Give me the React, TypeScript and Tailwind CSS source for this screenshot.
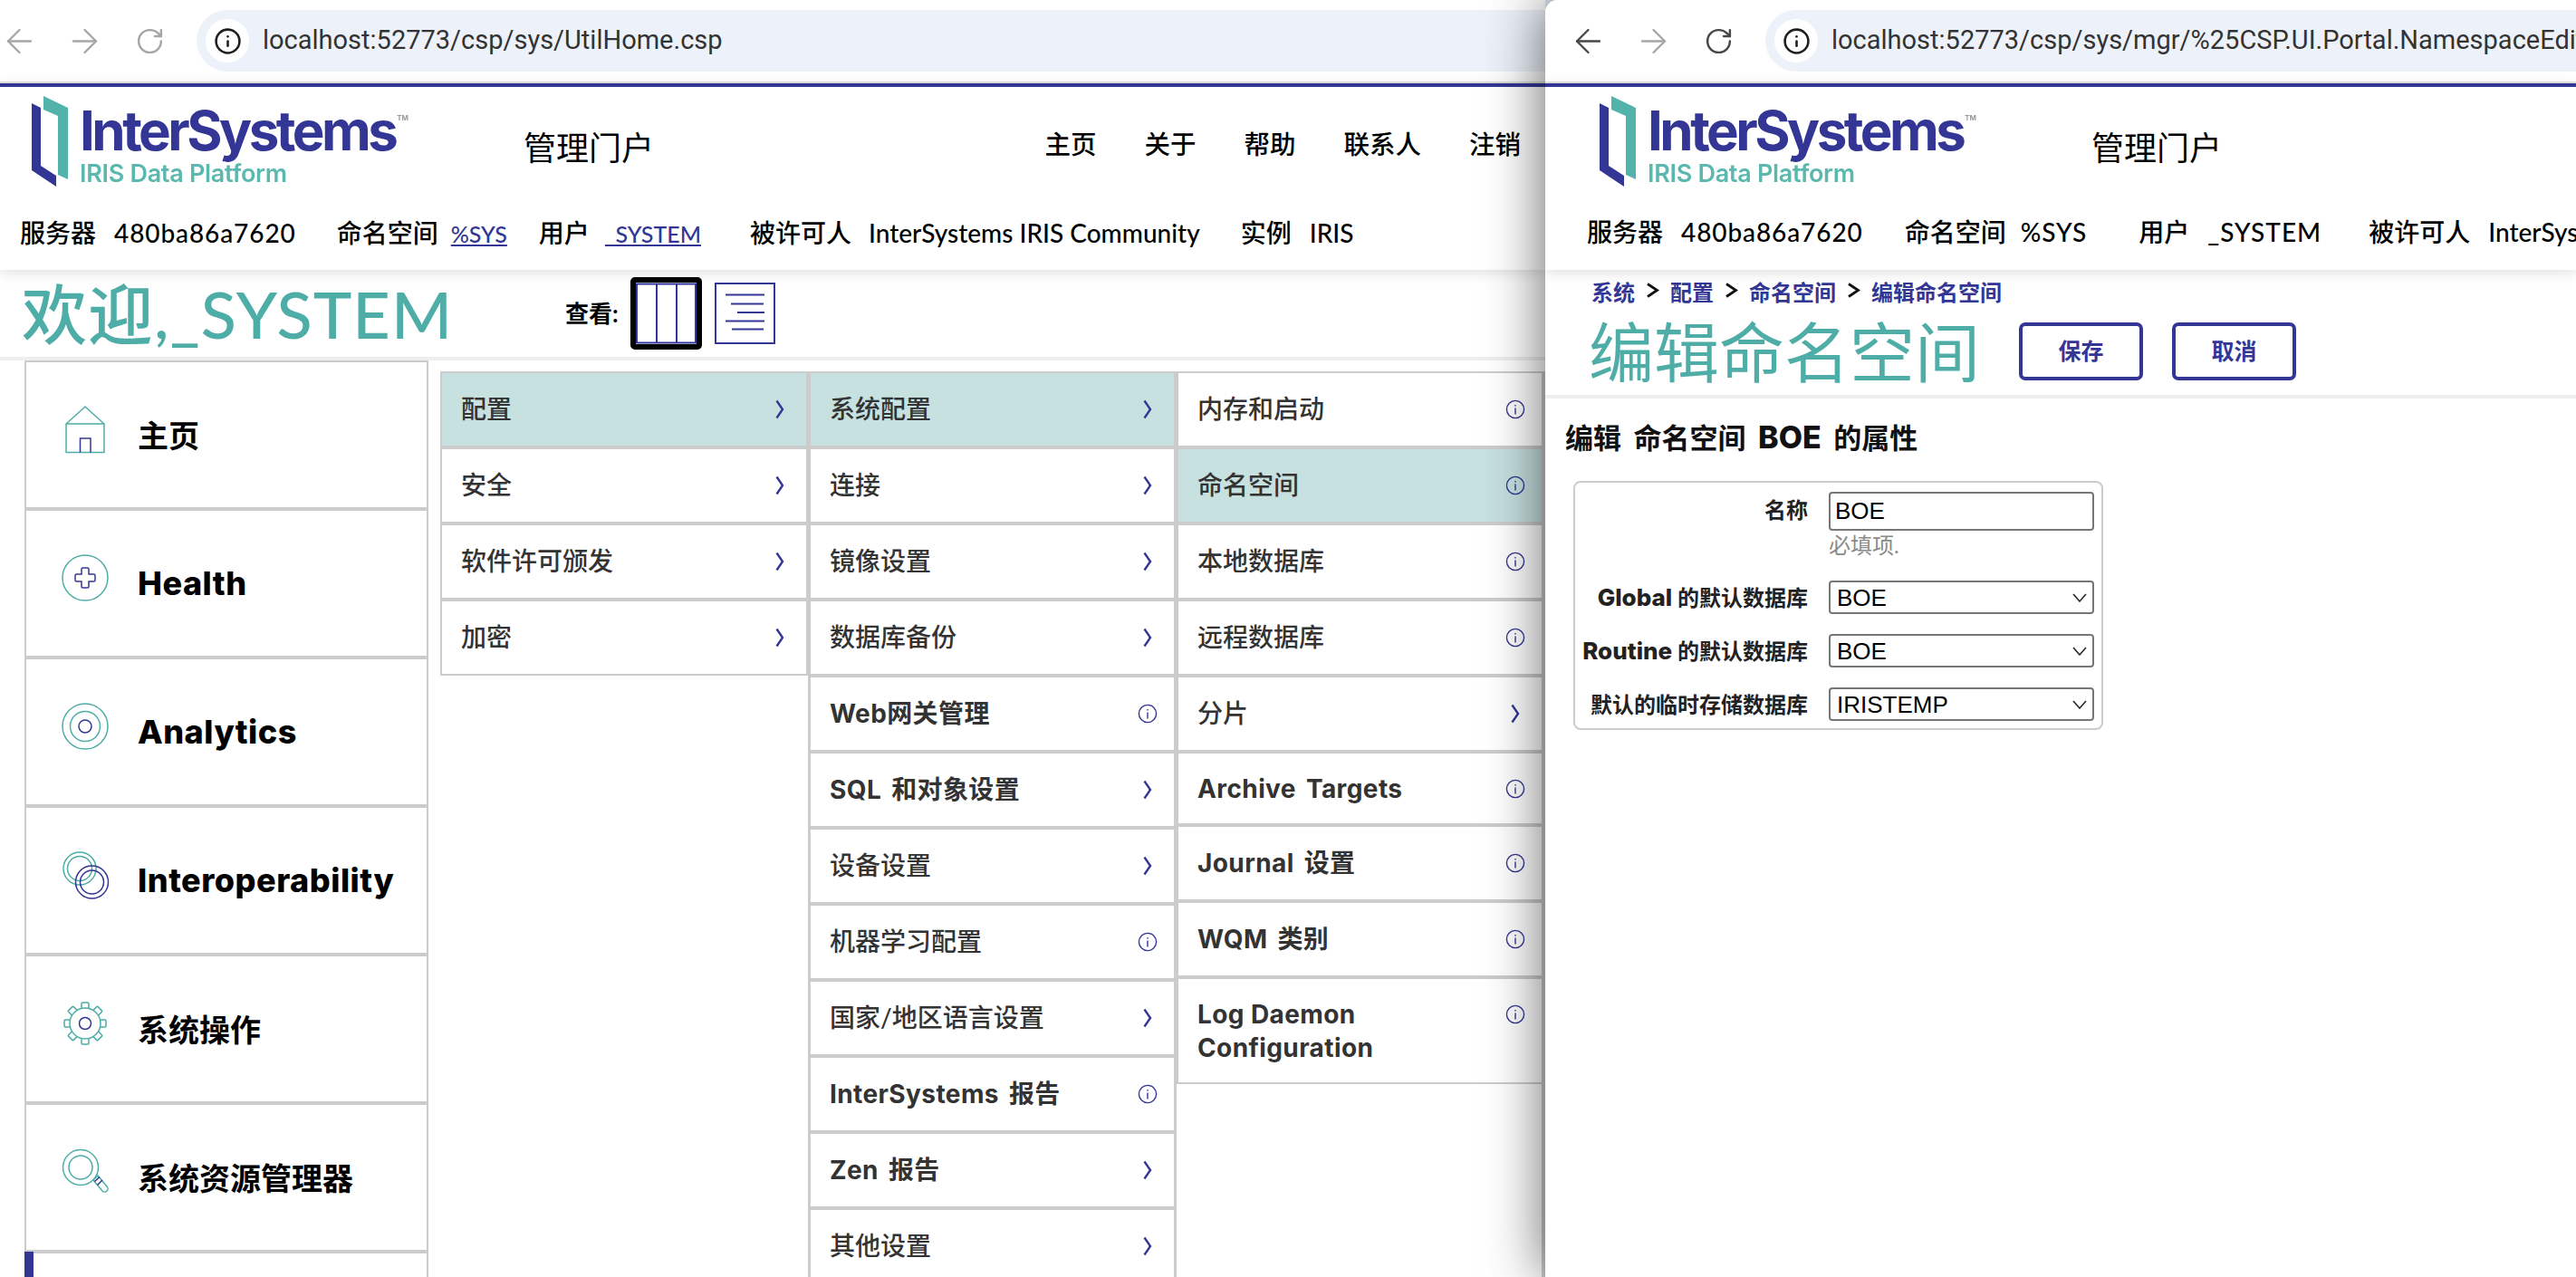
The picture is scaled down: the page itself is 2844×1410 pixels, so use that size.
import { ArrowLeft, ArrowRight, Info, RotateCw } from "lucide-react";
import type { ReactNode } from "react";

const TEAL = "#4fada7";
const BLUE = "#333695";

type Row = { label: string; kind: "more" | "info"; active?: boolean; bold?: boolean; short?: boolean };

const col1: Row[] = [
  { label: "配置", kind: "more", active: true },
  { label: "安全", kind: "more" },
  { label: "软件许可颁发", kind: "more" },
  { label: "加密", kind: "more" },
];

const col2: Row[] = [
  { label: "系统配置", kind: "more", active: true },
  { label: "连接", kind: "more" },
  { label: "镜像设置", kind: "more" },
  { label: "数据库备份", kind: "more" },
  { label: "Web网关管理", kind: "info", bold: true },
  { label: "SQL 和对象设置", kind: "more", bold: true },
  { label: "设备设置", kind: "more" },
  { label: "机器学习配置", kind: "info" },
  { label: "国家/地区语言设置", kind: "more" },
  { label: "InterSystems 报告", kind: "info", bold: true },
  { label: "Zen 报告", kind: "more", bold: true },
  { label: "其他设置", kind: "more" },
];

const col3: Row[] = [
  { label: "内存和启动", kind: "info" },
  { label: "命名空间", kind: "info", active: true },
  { label: "本地数据库", kind: "info" },
  { label: "远程数据库", kind: "info" },
  { label: "分片", kind: "more" },
  { label: "Archive Targets", kind: "info", bold: true, short: true },
  { label: "Journal 设置", kind: "info", bold: true },
  { label: "WQM 类别", kind: "info", bold: true },
];

function Chevron() {
  return (
    <svg width="10" height="22" viewBox="0 0 10 22" fill="none" stroke={BLUE} strokeWidth="2.4">
      <path d="M1.5 1.5 8 11 1.5 20.5" />
    </svg>
  );
}

function InfoDot() {
  return (
    <svg width="22" height="22" viewBox="0 0 22 22" fill="none" stroke={BLUE} strokeWidth="1.4">
      <circle cx="11" cy="11" r="9.6" />
      <path d="M11 9.5v7" />
      <path d="M11 6v1.4" />
    </svg>
  );
}

function MenuRow({ row }: { row: Row }) {
  return (
    <div
      className={`flex shrink-0 items-center justify-between border-b-4 border-[#cccccc] pl-[21px] pr-[18px] text-[28px] text-[#333333] ${
        row.short ? "h-[81px]" : "h-[84px]"
      } ${row.active ? "bg-[#c7e1e0]" : "bg-white"} ${
        row.bold ? "font-bold tracking-[0.4px] [word-spacing:4px] [font-family:Inter,'Noto_Sans_CJK_SC',sans-serif]" : "font-medium"
      }`}
    >
      <span className={row.bold ? "" : "pb-[2px]"}>{row.label}</span>
      <span className="flex w-[22px] justify-center">{row.kind === "more" ? <Chevron /> : <InfoDot />}</span>
    </div>
  );
}

function Logo() {
  return (
    <div className="flex select-none blur-[0.5px]">
      <svg width="42" height="102" viewBox="0 0 42 102" className="shrink-0">
        <path d="M13 0 40 13V92L29 87V22L13 15Z" fill="#52b3ab" />
        <path d="M0 8 10 13V77L27 88V100L0 82Z" fill={BLUE} />
      </svg>
      <div className="mt-[6px] ml-[11px] flex flex-col">
        <div className="flex items-start">
          <span className="text-[60px] leading-[65px] font-bold tracking-[-3.5px] text-[#333695] [font-family:Inter,sans-serif]">
            InterSystems
          </span>
          <span className="mt-[12px] ml-[2px] text-[8px] font-bold text-[#9a9a9a] [font-family:Inter,sans-serif]">TM</span>
        </div>
        <span className="text-[27px] leading-[30px] font-semibold tracking-[-0.3px] text-[#5bb8ae] [font-family:Inter,sans-serif]">
          IRIS Data Platform
        </span>
      </div>
    </div>
  );
}

function Toolbar({ active, url, barClass }: { active?: boolean; url: string; barClass: string }) {
  const dim = "#a4a6a8";
  const dark = "#474747";
  return (
    <div className="flex h-[92px] shrink-0 items-center border-b-2 border-[#e2e2e0] bg-white">
      <div className={`flex items-center ${barClass}`}>
        <ArrowLeft size={43} strokeWidth={1.3} color={active ? dark : dim} />
        <ArrowRight size={43} strokeWidth={1.3} color={dim} className="ml-[29px]" />
        <RotateCw size={33} strokeWidth={1.8} color={active ? dark : dim} className="ml-[34px]" />
      </div>
      <div className="ml-[35px] flex h-[68px] min-w-0 flex-1 items-center overflow-hidden rounded-l-[34px] bg-[#edf2fa] pl-[10px]">
        <span className="flex size-[48px] shrink-0 items-center justify-center rounded-full bg-white">
          <Info size={31} strokeWidth={2} color="#1f1f1f" />
        </span>
        <span className="ml-[15px] text-[29px] whitespace-nowrap text-[#333333] [font-family:Roboto,sans-serif]">{url}</span>
      </div>
    </div>
  );
}

function Pair({ label, value, className }: { label: string; value: ReactNode; className?: string }) {
  return (
    <div className={`flex shrink-0 items-center whitespace-nowrap ${className ?? "gap-[20px]"}`}>
      <span>{label}</span>
      {value}
    </div>
  );
}

function SideItem({ icon, label, bold }: { icon: ReactNode; label: string; bold?: boolean }) {
  return (
    <div className="flex h-[164px] shrink-0 items-center border-b-4 border-[#cccccc]">
      <span className="mb-[12px] ml-[35px] flex w-[60px] justify-center">{icon}</span>
      <span
        className={`ml-[28px] text-black ${
          bold ? "text-[36px] font-extrabold tracking-[0.5px] [font-family:Inter,sans-serif]" : "text-[34px] font-bold"
        }`}
      >
        {label}
      </span>
    </div>
  );
}

const iconProps = { width: 60, height: 60, viewBox: "0 0 60 60", fill: "none", strokeWidth: 1.5 };

function HomeIcon() {
  return (
    <svg {...iconProps}>
      <path d="M9 24 30 5 51 24V55.5H9Z M9 24H51" stroke={TEAL} strokeLinejoin="round" />
      <path d="M24.5 55.5V40H36V55.5" stroke={BLUE} />
    </svg>
  );
}

function HealthIcon() {
  return (
    <svg {...iconProps}>
      <circle cx="30" cy="30" r="25" stroke={TEAL} />
      <path
        d="M26 20.5a1.5 1.5 0 0 1 1.5-1.5h5a1.5 1.5 0 0 1 1.5 1.5V26h5.5a1.5 1.5 0 0 1 1.5 1.5v5a1.5 1.5 0 0 1-1.5 1.5H34v5.5a1.5 1.5 0 0 1-1.5 1.5h-5a1.5 1.5 0 0 1-1.5-1.5V34h-5.5a1.5 1.5 0 0 1-1.5-1.5v-5a1.5 1.5 0 0 1 1.5-1.5H26Z"
        stroke={BLUE}
      />
    </svg>
  );
}

function AnalyticsIcon() {
  return (
    <svg {...iconProps}>
      <circle cx="30" cy="30" r="25" stroke={TEAL} />
      <circle cx="30" cy="30" r="16.5" stroke={TEAL} />
      <circle cx="30" cy="30" r="7" stroke={BLUE} />
    </svg>
  );
}

function InteropIcon() {
  return (
    <svg {...iconProps}>
      <circle cx="24" cy="23" r="18" stroke={TEAL} />
      <circle cx="24" cy="23" r="13.5" stroke={TEAL} />
      <circle cx="37.5" cy="38" r="18" stroke={BLUE} />
      <circle cx="37.5" cy="38" r="13" stroke={BLUE} />
    </svg>
  );
}

function GearIcon() {
  const angles = [0, 45, 90, 135, 180, 225, 270, 315];
  return (
    <svg {...iconProps}>
      {angles.map((a) => (
        <rect key={a} x="26" y="7" width="8" height="8" rx="1" stroke={TEAL} transform={`rotate(${a} 30 30)`} />
      ))}
      <circle cx="30" cy="30" r="17" stroke={TEAL} fill="white" />
      <circle cx="30" cy="30" r="6.5" stroke={BLUE} />
    </svg>
  );
}

function SearchIcon() {
  return (
    <svg {...iconProps}>
      <circle cx="25" cy="25" r="19.5" stroke={TEAL} />
      <circle cx="25" cy="25" r="13" stroke={TEAL} />
      <path d="M39 39 44 34 54 46a3.5 3.5 0 0 1-5 5Z" stroke={TEAL} strokeLinejoin="round" />
      <path d="M43.5 44.5 49 39M40.5 40.5 46 35.5" stroke={BLUE} />
    </svg>
  );
}

function ColumnsIcon() {
  return (
    <span className="flex h-[80px] w-[79px] rounded-[5px] border-[6px] border-black">
      <svg width="67" height="68" viewBox="0 0 67 68" fill="none" stroke={BLUE} strokeWidth="2">
        <rect x="1" y="1.5" width="65" height="65" />
        <path d="M23 1.5V66.5M45 1.5V66.5" />
      </svg>
    </span>
  );
}

function ListIcon() {
  return (
    <svg width="67" height="68" viewBox="0 0 67 68" fill="none" stroke={BLUE} strokeWidth="2" className="ml-[14px]">
      <rect x="1" y="1" width="65" height="66" />
      <path d="M12 13.5H55M18 23.5H54M25 33H55M12 42.5H55M19 51.5H54" />
    </svg>
  );
}

function LeftWindow() {
  return (
    <div className="flex h-full w-[1706px] shrink-0 flex-col overflow-hidden bg-white">
      <Toolbar url="localhost:52773/csp/sys/UtilHome.csp" barClass="pl-0" />
      <header className="relative z-10 h-[206px] shrink-0 border-t-4 border-[#333695] bg-white shadow-[0_3px_14px_rgba(0,0,0,0.13)]">
        <div className="flex items-start pt-[10px] pl-[35px]">
          <div className="w-[543px] shrink-0">
            <Logo />
          </div>
          <span className="mt-[35px] text-[36px] leading-[44px]">管理门户</span>
          <nav className="mt-[33px] ml-auto flex gap-[53px] pr-[27px] text-[28.5px] leading-[40px] font-medium">
            <span>主页</span>
            <span>关于</span>
            <span>帮助</span>
            <span>联系人</span>
            <span>注销</span>
          </nav>
        </div>
        <div className="mt-[28px] flex items-center pl-[22px] text-[28px] leading-[40px] font-medium">
          <Pair label="服务器" value={<span className="tracking-[0.9px]">480ba86a7620</span>} />
          <Pair
            label="命名空间"
            className="ml-[45px] gap-[14px]"
            value={<span className="mt-[2px] text-[25px] text-[#333695] underline underline-offset-2">%SYS</span>}
          />
          <Pair
            label="用户"
            className="ml-[35px] gap-[17px]"
            value={<span className="mt-[2px] text-[25px] text-[#333695] underline underline-offset-2">_SYSTEM</span>}
          />
          <Pair label="被许可人" className="ml-[54px] gap-[19px]" value={<span>InterSystems IRIS Community</span>} />
          <Pair label="实例" className="ml-[45px] gap-[20px]" value={<span>IRIS</span>} />
        </div>
      </header>
      <div className="flex h-[100px] shrink-0 items-center border-b-4 border-[#eeeeee] pl-[24px]">
        <h1 className="w-[600px] shrink-0 text-[72px] leading-[90px] font-medium tracking-[1px] text-[#4fada7]">欢迎,_SYSTEM</h1>
        <span className="text-[26px] font-bold">查看:</span>
        <span className="ml-[13px] flex items-center">
          <ColumnsIcon />
          <ListIcon />
        </span>
      </div>
      <div className="flex min-h-0 flex-1 overflow-hidden pl-[27px]">
        <aside className="h-[1100px] w-[446px] shrink-0 border-x-2 border-t-2 border-[#cccccc]">
          <SideItem icon={<HomeIcon />} label="主页" />
          <SideItem icon={<HealthIcon />} label="Health" bold />
          <SideItem icon={<AnalyticsIcon />} label="Analytics" bold />
          <SideItem icon={<InteropIcon />} label="Interoperability" bold />
          <SideItem icon={<GearIcon />} label="系统操作" />
          <SideItem icon={<SearchIcon />} label="系统资源管理器" />
          <div className="relative mt-[-2px] ml-[-2px] h-[40px] w-[10px] bg-[#333695]" />
        </aside>
        <div className="ml-[13px] flex flex-1 items-stretch pt-[12px]">
          <div className="w-[406px] shrink-0 self-start border-x-2 border-t-2 border-[#cccccc] [&>div:last-child]:h-[82px] [&>div:last-child]:border-b-2">
            {col1.map((r) => (
              <MenuRow key={r.label} row={r} />
            ))}
          </div>
          <div className="w-[407px] shrink-0 border-x-[3px] border-t-2 border-[#cccccc]">
            {col2.map((r) => (
              <MenuRow key={r.label} row={r} />
            ))}
          </div>
          <div className="flex w-[407px] shrink-0 flex-col border-t-2 border-r-4 border-[#cccccc]">
            <div className="flex flex-col border-b-2 border-l-2 border-[#cccccc]">
              {col3.map((r) => (
                <MenuRow key={r.label} row={r} />
              ))}
              <div className="flex h-[114px] items-start justify-between pt-[21px] pr-[18px] pl-[21px] text-[28px] leading-[37px] font-bold tracking-[0.4px] text-[#333333] [font-family:Inter,sans-serif]">
                <span>
                  Log Daemon
                  <br />
                  Configuration
                </span>
                <span className="flex w-[22px] justify-center pt-[7px]">
                  <InfoDot />
                </span>
              </div>
            </div>
          </div>
        </div>
      </div>
    </div>
  );
}

function FieldLabel({ children }: { children: ReactNode }) {
  return <span className="block w-[280px] shrink-0 pr-[23px] text-right text-[24px] leading-[30px] font-bold whitespace-nowrap text-[#222222]">{children}</span>;
}

function LatinLabel({ children }: { children: ReactNode }) {
  return <span className="text-[26px] font-extrabold [font-family:Inter,sans-serif]">{children}</span>;
}

function SelectField({ label, value }: { label: ReactNode; value: string }) {
  return (
    <div className="flex items-center">
      <FieldLabel>{label}</FieldLabel>
      <div className="relative">
        <select
          defaultValue={value}
          className="h-[37px] w-[293px] appearance-none rounded-[4px] border-2 border-[#767676] bg-white pl-[7px] text-[26px] leading-[30px] text-black [font-family:'Liberation_Sans',sans-serif]"
        >
          <option>{value}</option>
        </select>
        <svg width="16" height="10" viewBox="0 0 16 10" fill="none" stroke="#222222" strokeWidth="1.5" className="pointer-events-none absolute top-[14px] right-[8px]">
          <path d="M1 1l7 8 7-8" />
        </svg>
      </div>
    </div>
  );
}

function Crumb() {
  return (
    <svg width="15" height="17" viewBox="0 0 15 17" fill="none" stroke="#111111" strokeWidth="2.8" className="mx-[12px] mb-[5px] shrink-0">
      <path d="M2 1.5 12.5 8.5 2 15.5" />
    </svg>
  );
}

function RightWindow() {
  return (
    <div className="relative z-20 flex h-full min-w-0 flex-1 flex-col overflow-hidden rounded-tl-[14px] bg-white">
      <Toolbar active url="localhost:52773/csp/sys/mgr/%25CSP.UI.Portal.NamespaceEdit.zen?PID=BOE" barClass="pl-[26px]" />
      <header className="relative z-10 h-[206px] shrink-0 border-t-4 border-[#333695] bg-white shadow-[0_3px_14px_rgba(0,0,0,0.13)]">
        <div className="flex items-start pt-[10px] pl-[60px]">
          <div className="w-[543px] shrink-0">
            <Logo />
          </div>
          <span className="mt-[35px] text-[36px] leading-[44px]">管理门户</span>
        </div>
        <div className="mt-[28px] flex items-center pl-[46px] text-[28px] leading-[40px] font-medium">
          <Pair label="服务器" value={<span className="tracking-[0.9px]">480ba86a7620</span>} />
          <Pair label="命名空间" className="ml-[46px] gap-[16px]" value={<span className="tracking-[1px]">%SYS</span>} />
          <Pair label="用户" className="ml-[57px] gap-[20px]" value={<span className="tracking-[1px]">_SYSTEM</span>} />
          <Pair label="被许可人" className="ml-[52px] gap-[20px]" value={<span>InterSystems IRIS Community</span>} />
        </div>
      </header>
      <div className="h-[142px] shrink-0 border-b-4 border-[#eeeeee] pl-[51px]">
        <div className="flex h-[48px] items-center pt-[1px] text-[24px] font-bold text-[#333695]">
          <span>系统</span>
          <Crumb />
          <span>配置</span>
          <Crumb />
          <span>命名空间</span>
          <Crumb />
          <span>编辑命名空间</span>
        </div>
        <div className="flex items-center">
          <h1 className="ml-[-3px] w-[475px] shrink-0 text-[72px] leading-[84px] text-[#4fada7]">编辑命名空间</h1>
          <button className="h-[64px] w-[137px] rounded-[7px] border-4 border-[#333695] text-[25px] font-bold text-[#333695]">保存</button>
          <button className="ml-[32px] h-[64px] w-[137px] rounded-[7px] border-4 border-[#333695] text-[25px] font-bold text-[#333695]">取消</button>
        </div>
      </div>
      <div className="pt-[23px] pl-[22px]">
        <h2 className="text-[31px] leading-[40px] font-bold text-[#111111] [word-spacing:6px]">
          编辑 命名空间 <span className="text-[34px] font-extrabold [font-family:Inter,sans-serif]">BOE</span> 的属性
        </h2>
        <div className="mt-[28px] ml-[9px] flex h-[275px] w-[585px] flex-col rounded-[8px] border-[2.5px] border-[#cccccc] pt-[10px]">
          <div className="flex items-start">
            <div className="pt-[5px]">
              <FieldLabel>名称</FieldLabel>
            </div>
            <div className="flex flex-col">
              <input
                readOnly
                value="BOE"
                className="h-[43px] w-[293px] rounded-[4px] border-2 border-[#767676] pl-[5px] text-[26px] text-black outline-none [font-family:'Liberation_Sans',sans-serif]"
              />
              <span className="text-[24px] leading-[32px] text-[#8a8a8a]">必填项.</span>
            </div>
          </div>
          <div className="mt-[23px] flex flex-col gap-[22px]">
            <SelectField label={<><LatinLabel>Global</LatinLabel> 的默认数据库</>} value="BOE" />
            <SelectField label={<><LatinLabel>Routine</LatinLabel> 的默认数据库</>} value="BOE" />
            <SelectField label="默认的临时存储数据库" value="IRISTEMP" />
          </div>
        </div>
      </div>
    </div>
  );
}

export default function App() {
  return (
    <div className="flex h-[1410px] w-[2844px] overflow-hidden bg-[#dfe6f6] text-black [font-family:Lato,'Noto_Sans_CJK_SC',sans-serif]">
      <LeftWindow />
      <div className="relative z-20 flex h-full min-w-0 flex-1 rounded-tl-[14px] shadow-[0_0_64px_rgba(0,0,0,0.62)]">
        <RightWindow />
      </div>
    </div>
  );
}
